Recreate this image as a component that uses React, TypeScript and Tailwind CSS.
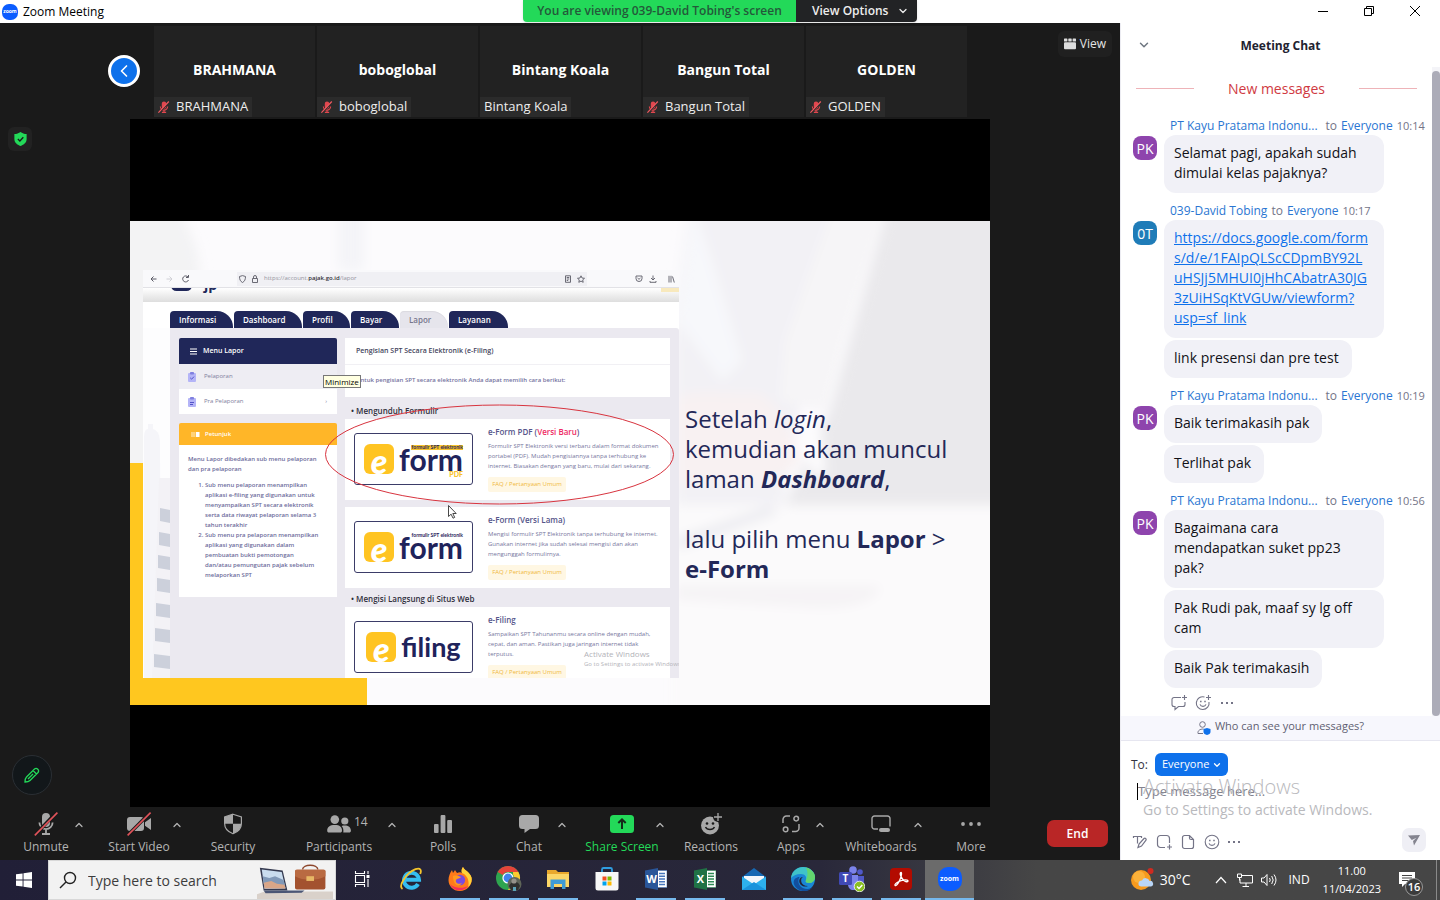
import React from "react";
import { ChevronDown, ChevronLeft, ChevronUp } from "lucide-react";

type IconProps = { className?: string };

/* ---------- meeting window icons ---------- */

function MutedMic({ className }: IconProps) {
  return (
    <svg viewBox="0 0 14 14" className={className} aria-hidden="true">
      <rect x="4.4" y="0.6" width="5.2" height="8.400" rx="2.6" fill="#e0474e" />
      <path d="M2.8 6.5a4.2 4.2 0 0 0 8.4 0M7 11v2M4.5 13.2h5" stroke="#e0474e" strokeWidth="1.4" fill="none" />
      <path d="M1.6 13.600 13 1.400" stroke="#2b2b2b" strokeWidth="1.600" />
      <path d="M.4 13.6 12.6 .6" stroke="#f0585f" strokeWidth="1.4" />
    </svg>
  );
}

function MicOff() {
  return (
    <svg viewBox="0 0 24 24" className="size-6" aria-hidden="true">
      <rect x="8" y="1" width="8" height="14" rx="4" fill="#a8a8a8" />
      <path d="M5.4 10.5a6.6 6.6 0 0 0 13.2 0M12 17.3v4M8 22h8" stroke="#a8a8a8" strokeWidth="1.8" fill="none" />
      <path d="M2 22 22 .8" stroke="#1a1a1a" strokeWidth="3.400" />
      <path d="M.8 23.4 23.4.6" stroke="#e0535a" strokeWidth="1.6" />
    </svg>
  );
}

function VideoOff() {
  return (
    <svg viewBox="0 0 26 24" className="h-6 w-[26px]" aria-hidden="true">
      <rect x="1" y="5" width="17" height="14" rx="3" fill="#a8a8a8" />
      <path d="M19 10.2 25 6v12l-6-4.2z" fill="#a8a8a8" />
      <path d="M3 22 24 .8" stroke="#1a1a1a" strokeWidth="3.400" />
      <path d="M1.6 23.4 24.6.6" stroke="#e0535a" strokeWidth="1.6" />
    </svg>
  );
}

function SecurityShield() {
  return (
    <svg viewBox="0 0 20 22" className="h-[22px] w-5" aria-hidden="true">
      <path d="M10 1.2 18.4 4v6.5c0 5-3.6 8.5-8.4 10.3C5.200 19 1.600 15.500 1.600 10.500V4z" fill="#1a1a1a" stroke="#a8a8a8" strokeWidth="1.2" />
      <path d="M10 1.200V10.800H1.600V4zM10 10.800h8.400C18.200 15.600 14.700 19 10 20.800z" fill="#a8a8a8" />
    </svg>
  );
}

function People() {
  return (
    <svg viewBox="0 0 24 18" className="h-[18px] w-6" fill="#a8a8a8" aria-hidden="true">
      <circle cx="7.800" cy="4.600" r="4.300" />
      <path d="M.2 15.500c0-3.600 2.600-5.600 7.600-5.600s7.200 2 7.200 5.600c0 1.600-.6 2-2 2H2.200c-1.400 0-2-.4-2-2z" />
      <circle cx="17.800" cy="6" r="3.600" />
      <path d="M16.300 17.500c.4-2.800-.2-5.200-1.700-6.600 5.200-1.300 9.300.6 9.300 4.600 0 1.400-.6 2-2 2z" />
    </svg>
  );
}

function PollBars() {
  return (
    <svg viewBox="0 0 18 18" className="size-[18px]" fill="#a8a8a8" aria-hidden="true">
      <rect x="0" y="9" width="4.600" height="9" rx="1" />
      <rect x="6.600" y="0" width="4.800" height="18" rx="1" />
      <rect x="13.200" y="5" width="4.800" height="13" rx="1" />
    </svg>
  );
}

function ChatBubble() {
  return (
    <svg viewBox="0 0 20 18" className="h-[18px] w-5" fill="#a8a8a8" aria-hidden="true">
      <path d="M3.500 0h13A3.500 3.500 0 0 1 20 3.500v7a3.500 3.500 0 0 1-3.500 3.500H11l-5.500 4v-4h-2A3.500 3.500 0 0 1 0 10.500v-7A3.500 3.500 0 0 1 3.500 0z" />
    </svg>
  );
}

function ShareIcon() {
  return (
    <svg viewBox="0 0 24 18" className="h-[18px] w-6" aria-hidden="true">
      <rect width="24" height="18" rx="3.500" fill="#23d959" />
      <path d="M12 14V4.500M8.300 8 12 4.300 15.700 8" stroke="#152a1a" strokeWidth="2" fill="none" />
    </svg>
  );
}

function ReactionIcon() {
  return (
    <svg viewBox="0 0 22 22" className="size-[22px]" aria-hidden="true">
      <circle cx="10" cy="12.500" r="9" fill="#a8a8a8" />
      <circle cx="18" cy="4" r="5" fill="#1a1a1a" />
      <path d="M18 0v8M14 4h8" stroke="#a8a8a8" strokeWidth="1.300" />
      <circle cx="7" cy="10.500" r="1.300" fill="#1a1a1a" />
      <circle cx="13" cy="10.500" r="1.300" fill="#1a1a1a" />
      <path d="M5.500 14c1.500 3.400 7.500 3.400 9 0" stroke="#1a1a1a" strokeWidth="1.400" fill="none" />
    </svg>
  );
}

function AppsIcon() {
  return (
    <svg viewBox="0 0 18 18" className="size-[18px]" fill="none" stroke="#a8a8a8" strokeWidth="1.500" aria-hidden="true">
      <path d="M1 8V4.500A3.500 3.500 0 0 1 4.500 1H8M10 16.500h3.500a3.500 3.500 0 0 0 3.500-3.500V9" />
      <circle cx="14.200" cy="3.600" r="2.300" />
      <circle cx="3.600" cy="14.400" r="2.300" />
    </svg>
  );
}

function WhiteboardIcon() {
  return (
    <svg viewBox="0 0 20 18" className="h-[18px] w-5" aria-hidden="true">
      <path d="M7 14H3.500A2.500 2.500 0 0 1 1 11.500v-8A2.500 2.500 0 0 1 3.500 1h13A2.500 2.500 0 0 1 19 3.500v8" fill="none" stroke="#a8a8a8" strokeWidth="1.400" />
      <rect x="8" y="13" width="11" height="4" rx="2" fill="#a8a8a8" />
    </svg>
  );
}

function MoreIcon() {
  return (
    <svg viewBox="0 0 22 6" className="h-[6px] w-[22px]" fill="#a8a8a8" aria-hidden="true">
      <circle cx="3" cy="3" r="1.900" />
      <circle cx="11" cy="3" r="1.900" />
      <circle cx="19" cy="3" r="1.900" />
    </svg>
  );
}

function Dots() {
  return (
    <svg viewBox="0 0 12 4" className="h-1 w-3" fill="#747487" aria-hidden="true">
      <rect x="0" y="1" width="2" height="2" />
      <rect x="5" y="1" width="2" height="2" />
      <rect x="10" y="1" width="2" height="2" />
    </svg>
  );
}

function SmileIcon({ plus = false }: { plus?: boolean }) {
  return (
    <svg viewBox="0 0 16 16" className="size-4" fill="none" stroke="#747487" strokeWidth="1.100" aria-hidden="true">
      {plus ? (
        <>
          <path d="M9.500 2A6.400 6.400 0 1 0 14 7" />
          <path d="M13.500 0v5M11 2.500h5" />
        </>
      ) : (
        <circle cx="8" cy="8" r="6.800" />
      )}
      <path d="M5 9.400c1 2.600 5 2.600 6 0" />
      <path d="M5.800 5.800v1.400M10 5.800v1.400" strokeWidth="1.500" />
    </svg>
  );
}

/* ---------- title bar ---------- */

function TitleBar() {
  return (
    <header className="grid h-[23px] grid-cols-[1fr_auto_1fr] bg-white">
      <div className="flex items-center gap-[5px] pl-[2px]">
        <span className="flex size-4 items-center justify-center rounded-[7px] bg-[#0b5cff] text-[5px] font-bold text-white">zoom</span>
        <h1 className="text-xs text-black">Zoom Meeting</h1>
      </div>
      <div className="flex h-[22px] overflow-hidden rounded-b-[4px] text-xs font-semibold shadow">
        <p className="flex w-[273px] items-center justify-center bg-[#23d959] text-[#24583a]">You are viewing 039-David Tobing's screen</p>
        <button className="flex w-[121px] items-center justify-between bg-[#222325] pr-2 pl-4 text-[#eee]">
          View Options
          <ChevronDown className="size-3" strokeWidth={2.500} />
        </button>
      </div>
      <div className="flex items-center justify-end gap-[34px] pr-[19px] pb-[2px]">
        <button aria-label="Minimize window">
          <svg viewBox="0 0 12 12" className="size-3"><path d="M1 6.500h10" stroke="#000" /></svg>
        </button>
        <button aria-label="Restore window">
          <svg viewBox="0 0 12 12" className="size-3" fill="none" stroke="#000"><path d="M1.500 3.500h7v7h-7zM3.500 3V1.500h7v7H9" /></svg>
        </button>
        <button aria-label="Close window">
          <svg viewBox="0 0 12 12" className="size-3"><path d="m1 1 10 10M11 1 1 11" stroke="#000" /></svg>
        </button>
      </div>
    </header>
  );
}

/* ---------- participant strip ---------- */

const participants = [
  { name: "BRAHMANA", muted: true },
  { name: "boboglobal", muted: true },
  { name: "Bintang Koala", muted: false },
  { name: "Bangun Total", muted: true },
  { name: "GOLDEN", muted: true },
];

function ParticipantStrip() {
  return (
    <section aria-label="Participants" className="flex h-24 items-start pr-2 pl-[108px]">
      <button aria-label="Previous participants" className="mt-8 mr-[14px] flex size-8 shrink-0 items-center justify-center rounded-full border-[3px] border-white bg-[#0e71eb] text-white">
        <ChevronLeft className="size-5" strokeWidth={2} />
      </button>
      <ul className="flex gap-[2px] pt-[3px]">
        {participants.map((p) => (
          <li key={p.name} className="grid h-[91px] w-[161px] grid-rows-[1fr_20px] bg-[#222]">
            <p className="pt-[34px] text-center text-[14px] leading-5 font-bold text-white">{p.name}</p>
            <p className="flex w-max items-center gap-[6px] bg-[#2b2b2b] px-1 text-[13px] text-[#eee]">
              {p.muted && <MutedMic className="size-3" />}
              {p.name}
            </p>
          </li>
        ))}
      </ul>
      <button className="mt-2 ml-auto flex h-[26px] items-center gap-1 rounded-md bg-[#202020] px-[6px] text-xs text-[#e4e4e4]">
        <svg viewBox="0 0 12 12" className="size-3" fill="#ddd" aria-hidden="true">
          <rect x="0" y="0.500" width="3.400" height="3" rx=".6" /><rect x="4.300" y="0.500" width="3.400" height="3" rx=".6" /><rect x="8.600" y="0.500" width="3.400" height="3" rx=".6" />
          <rect x="0" y="4.300" width="12" height="7" rx="1" />
        </svg>
        View
      </button>
    </section>
  );
}

/* ---------- shared slide ---------- */

function SlideBackdrop() {
  return (
    <svg viewBox="0 0 860 484" preserveAspectRatio="none" className="absolute inset-0 size-full" aria-hidden="true">
      <defs>
        <filter id="soft" x="-20%" y="-20%" width="140%" height="140%"><feGaussianBlur stdDeviation="6" /></filter>
      </defs>
      <rect width="860" height="484" fill="#fcfbfd" />
      <g filter="url(#soft)">
        <path d="M-60-40H30C60 0 70 30 70 55V280H-60z" fill="#f3f3f4" />
        <path d="M208-40h26v90h-26z" fill="#f4f4f8" />
        <path d="M562-40h160l-40 160-30 165H545V90z" fill="#f2f1f5" />
        <path d="M562-20l20 60 30 100-20 20-45-60z" fill="#f7f8fb" />
        <path d="M765-40h170v324H655l45-94z" fill="#eae9ec" />
        <path d="M712-40h50l-45 150-22 80-45-10 5-60z" fill="#f6f5f7" />
        <path d="M548 175c30-8 50 0 80-3 20 10 35 40 42 70l-30 20h-95z" fill="#f8f1f2" />
        <path d="M677 205l14 8 5 40h-16z" fill="#fdfcfd" />
        <path d="M540 284h400v260H540z" fill="#fbfafb" />
        <path d="M545 318l95-33 8 7L548 328z" fill="#ebebf0" />
        <path d="M545 365h205c0 15-30 22-60 22L545 378z" fill="#f5f3f5" />
      </g>
      <path d="M0 242h13v215h224v27H0z" fill="#ffc71f" />
    </svg>
  );
}

function Building() {
  const windows = [
    [17, 180], [16, 204], [15, 227], [14, 250], [13, 275], [12, 300], [11, 326],
  ];
  return (
    <svg viewBox="0 0 27 350" preserveAspectRatio="none" className="h-full w-[27px] shrink-0" aria-hidden="true">
      <rect width="27" height="350" fill="#fdfdfe" />
      <path d="M1 350V110q0-9 4-9v-5h5v5q6 1 7 12l1 237z" fill="#f5f5f9" />
      <path d="M16 150h11v200H9z" fill="#f3f2f6" />
      {windows.map(([x, y]) => (
        <path key={y} d={`M${x} ${y}L27 ${y + 2}V${y + 15}L${x} ${y + 13}z`} fill="#ccd0db" />
      ))}
    </svg>
  );
}

function PajakLogo({ word, caption, pdf = false }: { word: string; caption?: string; pdf?: boolean }) {
  return (
    <div className="mt-[14px] flex h-[52px] w-[119px] shrink-0 items-center justify-center gap-[5px] rounded-[3px] border border-[#3b3c68]">
      <span className="flex size-[30px] items-end justify-center overflow-hidden rounded-[6px] bg-[#ffc422] font-['Lato',sans-serif] text-[34px] leading-[27px] font-black text-white italic">e</span>
      <span className={`relative font-['Lato',sans-serif] font-bold text-[#1f235b] ${caption ? "text-[30px] leading-[36px]" : "text-[27px] leading-[36px]"}`}>
        {word}
        {caption && (
          <small className={`absolute top-[4px] right-0 pl-px text-[5px] leading-[5px] whitespace-nowrap ${pdf ? "bg-[#f8c32c]" : ""}`}>{caption}</small>
        )}
        {pdf && <small className="absolute right-0 bottom-0 text-[7px] leading-[6px] font-black text-[#f8c32c]">PDF</small>}
      </span>
    </div>
  );
}

function FormCard({ logo, title, lines }: { logo: React.ReactNode; title: React.ReactNode; lines: string[] }) {
  return (
    <article className="flex h-[81px] gap-[15px] bg-white pl-[9px]">
      {logo}
      <div className="pt-2">
        <h4 className="text-[8px] leading-[10px] font-semibold text-[#55558a]">{title}</h4>
        <p className="mt-1 text-[6px] leading-[10px] whitespace-nowrap text-[#77779e]">
          {lines.map((l) => (
            <span key={l} className="block">{l}</span>
          ))}
        </p>
        <a href="#faq" className="mt-[6px] block w-[78px] rounded-[2px] bg-[#fff7e3] text-center text-[6px] leading-[15px] font-medium text-[#f0b83c]">FAQ / Pertanyaan Umum</a>
      </div>
    </article>
  );
}

const siteTabs = [
  { label: "Informasi", width: "w-[63px]" },
  { label: "Dashboard", width: "w-[68px]" },
  { label: "Profil", width: "w-[47px]" },
  { label: "Bayar", width: "w-[48px]" },
  { label: "Lapor", width: "w-[48px]", active: true },
  { label: "Layanan", width: "w-[59px]" },
];

function Clipboard({ done = false }: { done?: boolean }) {
  return (
    <svg viewBox="0 0 8 10" className="h-[10px] w-2" aria-hidden="true">
      <rect x="0" y="1" width="8" height="9" rx="1" fill="#b4b4f7" />
      <rect x="2" y="0" width="4" height="2.500" rx=".8" fill="#8080e0" />
      <path d={done ? "M2.200 5.800 3.600 7.200 6 4.600" : "M2 5.500h4M2 7.500h3"} stroke="#5353c8" strokeWidth="1" fill="none" />
    </svg>
  );
}

function BrowserShot() {
  return (
    <div className="relative flex h-[408px] w-[536px] shrink-0 flex-col overflow-hidden bg-white">
      <div className="flex h-[18px] shrink-0 items-center border-b border-[#e2e2e6] bg-[#f9f9fb] pr-1 pl-[7px] text-[#5b5b66]">
        <svg viewBox="0 0 42 10" className="h-[10px] w-[42px]" fill="none" stroke="currentColor" aria-hidden="true">
          <path d="M6.500 5H1M3.500 2.500 1 5l2.500 2.500" />
          <path d="M16.500 5H22M19.500 2.500 22 5l-2.500 2.500" stroke="#d0d0d6" />
          <path d="M38 3a3 3 0 1 0 .5 3M38.500 1v2.500H36" />
        </svg>
        <div className="ml-[45px] flex h-[14px] w-[350px] items-center gap-[6px] bg-[#f0f0f4] pl-[2px] text-[6px] text-[#94949e]">
          <svg viewBox="0 0 19 8" className="h-2 w-[19px]" fill="none" stroke="#5b5b66" strokeWidth=".9" aria-hidden="true">
            <path d="M3.500.600 6.500 1.500c0 3-.8 4.800-3 6-2.200-1.200-3-3-3-6zM13.500 3.500h5v4h-5zM14.500 3.500v-1.500a1.500 1.500 0 0 1 3 0v1.500" />
          </svg>
          <span>https://account.<b className="font-semibold text-[#303038]">pajak.go.id</b>/lapor</span>
          <svg viewBox="0 0 22 8" className="mr-px ml-auto h-2 w-[22px]" fill="none" stroke="#5b5b66" strokeWidth=".9" aria-hidden="true">
            <path d="M1.500.800h5v6.500h-5zM2.700 2.500h2.600M2.700 4h2.600M2.700 5.500h1.500" />
            <path d="m17 .8 1 2.200 2.500.3-1.800 1.600.5 2.400L17 6.100l-2.200 1.200.5-2.400-1.800-1.600L16 3z" />
          </svg>
        </div>
        <svg viewBox="0 0 40 8" className="ml-auto h-2 w-10" fill="none" stroke="currentColor" strokeWidth=".9" aria-hidden="true">
          <path d="M1 1h6v2.500a3 3 0 0 1-6 0zM2.500 3 4 4.300 5.500 3M18 .500v4.500M16 3l2 2 2-2M15 6v1.300h6V6M34 .800v6.700M36 .800v6.700M37.500 1.500l1.800 6" />
        </svg>
      </div>
      <div className="flex h-[14px] shrink-0 gap-3 overflow-hidden bg-linear-to-b from-white to-[#dedede] pl-7">
        <span className="-mt-2 h-[11px] w-[21px] rounded-[8px] bg-[#202759]" />
        <span className="-mt-[12px] text-[14px] leading-[18px] font-bold text-[#202759]">jp</span>
        <span className="ml-auto h-1 w-[18px] bg-[#f8e9bd]" />
      </div>
      <nav className="flex h-[26px] shrink-0 items-end gap-px pl-[27px] text-[8px] font-semibold">
        {siteTabs.map((t) => (
          <a key={t.label} href="#tab" className={`${t.width} h-[17px] rounded-tl-[4px] rounded-tr-[16px] pl-[9px] leading-[18px] ${t.active ? "bg-[#e6e5ec] text-[#77778c] inset-shadow-xs" : "bg-[#202759] text-white"}`}>
            {t.label}
          </a>
        ))}
      </nav>
      <div className="flex min-h-0 flex-1">
        <Building />
        <div className="flex min-w-0 flex-1 gap-2 rounded-tr-[3px] bg-[#ebe9f0] px-[9px] pt-[10px]">
          <aside className="w-[158px] shrink-0">
            <h2 className="flex h-[26px] items-center gap-[6px] rounded-t-[2px] bg-[#202759] pl-[11px] text-[7px] font-semibold text-white">
              <svg viewBox="0 0 7 7" className="size-[7px]" aria-hidden="true"><path d="M0 1h7M0 3.500h7M0 6h7" stroke="#fff" strokeWidth="1.200" /></svg>
              Menu Lapor
            </h2>
            <ul className="text-[6px] text-[#80809c]">
              <li className="flex h-[25px] items-center gap-2 bg-[#eeedf3] pl-[9px]"><Clipboard done />Pelaporan</li>
              <li className="flex h-[25px] items-center gap-2 bg-white pr-[10px] pl-[9px]"><Clipboard />Pra Pelaporan<span className="ml-auto">›</span></li>
            </ul>
            <h2 className="mt-[9px] flex h-[22px] items-center gap-[5px] rounded-t-[2px] bg-[#ffb628] pl-3 text-[6px] font-semibold text-white">
              <svg viewBox="0 0 9 7" className="h-[7px] w-[9px]" aria-hidden="true"><path d="M0 1h4v5H0z" fill="#ffd27a" /><path d="M4.800 1H8.500v5H4.800z" fill="#fff" /></svg>
              Petunjuk
            </h2>
            <div className="h-[152px] bg-white pt-[9px] pl-[9px] text-[6px] leading-[10px] font-semibold whitespace-nowrap text-[#6d6c9b]">
              <p>Menu Lapor dibedakan sub menu pelaporan<br />dan pra pelaporan</p>
              <ol className="mt-[6px] list-decimal pl-[17px]">
                <li>Sub menu pelaporan menampilkan<br />aplikasi e-filing yang digunakan untuk<br />menyampaikan SPT secara elektronik<br />serta data riwayat pelaporan selama 3<br />tahun terakhir</li>
                <li>Sub menu pra pelaporan menampilkan<br />aplikasi yang digunakan dalam<br />pembuatan bukti pemotongan<br />dan/atau pemungutan pajak sebelum<br />melaporkan SPT</li>
              </ol>
            </div>
          </aside>
          <div className="min-w-0 flex-1">
            <div className="h-[59px] bg-white pl-[11px]">
              <h3 className="-ml-[11px] border-b border-[#f1f0f4] pl-[11px] text-[7px] leading-[26px] font-semibold text-[#45455c]">Pengisian SPT Secara Elektronik (e-Filing)</h3>
              <p className="text-[6px] leading-[31px] font-semibold text-[#7573a0]">Untuk pengisian SPT secara elektronik Anda dapat memilih cara berikut:</p>
            </div>
            <h3 className="h-[22px] pt-[7px] pl-[6px] text-[8px] leading-[13px] font-semibold text-[#2f2f3c]">• Mengunduh Formulir</h3>
            <FormCard
              logo={<PajakLogo word="form" caption="formulir SPT elektronik" pdf />}
              title={<>e-Form PDF (<span className="text-[#ee2a64]">Versi Baru</span>)</>}
              lines={["Formulir SPT Elektronik versi terbaru dalam format dokumen", "portabel (PDF). Mudah pengisiannya tanpa terhubung ke", "internet. Biasakan dengan yang baru, mulai dari sekarang."]}
            />
            <div className="h-[7px]" />
            <FormCard
              logo={<PajakLogo word="form" caption="formulir SPT elektronik" />}
              title="e-Form (Versi Lama)"
              lines={["Mengisi formulir SPT Elektronik tanpa terhubung ke internet.", "Gunakan internet jika sudah selesai mengisi dan akan", "mengunggah formulirnya."]}
            />
            <h3 className="h-[19px] pt-1 pl-[6px] text-[8px] leading-[13px] font-semibold text-[#2f2f3c]">• Mengisi Langsung di Situs Web</h3>
            <FormCard
              logo={<PajakLogo word="filing" />}
              title="e-Filing"
              lines={["Sampaikan SPT Tahunanmu secara online dengan mudah,", "cepat, dan aman. Pastikan juga jaringan internet tidak", "terputus."]}
            />
          </div>
        </div>
      </div>
      <span className="absolute top-[105px] left-[180px] border border-[#777] bg-[#ffffe1] px-px text-[8px] leading-[11px] text-black">Minimize</span>
      <p className="absolute top-[378px] left-[441px] text-[8px] leading-[11px] whitespace-nowrap text-[#b3b3b9]">
        Activate Windows
        <span className="block text-[6px] leading-[10px]">Go to Settings to activate Windows.</span>
      </p>
      <svg viewBox="0 0 536 408" className="pointer-events-none absolute inset-0 size-full" aria-hidden="true">
        <ellipse cx="356.500" cy="184.500" rx="174" ry="49.500" fill="none" stroke="#d8343f" strokeWidth="1" />
        <path d="M305.500 235.500v11l2.600-2.300 1.900 4 1.700-.8-1.900-3.900h3.400z" fill="#fff" stroke="#333" strokeWidth=".9" />
      </svg>
    </div>
  );
}

function Slide() {
  return (
    <article className="relative flex h-[484px] w-full overflow-hidden bg-white">
      <SlideBackdrop />
      <div className="relative flex gap-[6px] pt-[49px] pl-[13px]">
        <BrowserShot />
        <div className="pt-[134px] text-[24px] leading-[30px] whitespace-nowrap text-[#232858]">
          <p>Setelah <i>login</i>,<br />kemudian akan muncul<br />laman <b><i>Dashboard</i></b>,</p>
          <p className="mt-[30px]">lalu pilih menu <b>Lapor</b> &gt;<br /><b>e-Form</b></p>
        </div>
      </div>
    </article>
  );
}

/* ---------- meeting toolbar ---------- */

type Tool = { label: string; icon: React.ReactNode; box: string; menu?: boolean; green?: boolean; count?: number };

const tools: Tool[] = [
  { label: "Unmute", icon: <MicOff />, box: "ml-[21px] w-[50px]", menu: true },
  { label: "Start Video", icon: <VideoOff />, box: "ml-[22px] w-[60px]", menu: true },
  { label: "Security", icon: <SecurityShield />, box: "ml-[23px] w-[50px]" },
  { label: "Participants", icon: <People />, box: "ml-12 w-[66px]", menu: true, count: 14 },
  { label: "Polls", icon: <PollBars />, box: "ml-[18px] w-[50px]" },
  { label: "Chat", icon: <ChatBubble />, box: "ml-9 w-[50px]", menu: true },
  { label: "Share Screen", icon: <ShareIcon />, box: "ml-[22px] w-[60px]", menu: true, green: true },
  { label: "Reactions", icon: <ReactionIcon />, box: "ml-[18px] w-[50px]" },
  { label: "Apps", icon: <AppsIcon />, box: "ml-[34px] w-[42px]", menu: true },
  { label: "Whiteboards", icon: <WhiteboardIcon />, box: "ml-6 w-[58px]", menu: true },
  { label: "More", icon: <MoreIcon />, box: "ml-5 w-[50px]" },
];

function MeetingToolbar() {
  return (
    <footer className="flex h-[53px] items-start pr-3">
      {tools.map((t) => (
        <React.Fragment key={t.label}>
          <button className={`${t.box} relative flex shrink-0 flex-col items-center text-xs whitespace-nowrap ${t.green ? "text-[#23d959]" : "text-[#b4b4b4]"}`}>
            <span className="flex h-[34px] items-center">{t.icon}</span>
            <span className="-mt-[2px] leading-4">{t.label}</span>
            {t.count && <span className="absolute top-[7px] left-[48px] leading-4">{t.count}</span>}
          </button>
          {t.menu && (
            <button aria-label={`${t.label} options`} className={`${t.count ? "ml-3" : ""} mt-3 flex w-4 shrink-0 justify-center text-[#b4b4b4]`}>
              <ChevronUp className="size-3" strokeWidth={2.500} />
            </button>
          )}
        </React.Fragment>
      ))}
      <button className="mt-[13px] ml-auto h-[27px] w-[61px] rounded-[7px] bg-[#b92626] text-xs font-semibold text-white">End</button>
    </footer>
  );
}

/* ---------- chat panel ---------- */

type Message = { body: React.ReactNode; wide?: boolean };
type Group = { from: string; initials: string; color: string; time: string; gap: string; messages: Message[] };

const link = ["https://docs.google.com/form", "s/d/e/1FAIpQLScCDpmBY92L", "uHSJj5MHUI0jHhCAbatrA30JG", "3zUiHSqKtVGUw/viewform?", "usp=sf_link"];

const groups: Group[] = [
  { from: "PT Kayu Pratama Indonu...", initials: "PK", color: "bg-[#8e44ad]", time: "10:14", gap: "gap-2", messages: [{ wide: true, body: <>Selamat pagi, apakah sudah<br />dimulai kelas pajaknya?</> }] },
  {
    from: "039-David Tobing", initials: "0T", color: "bg-[#1f7cb8]", time: "10:17", gap: "gap-1",
    messages: [
      { wide: true, body: <a href={link.join("")} className="text-[#0e71eb] underline">{link.map((l) => <span key={l} className="block">{l}</span>)}</a> },
      { body: "link presensi dan pre test" },
    ],
  },
  { from: "PT Kayu Pratama Indonu...", initials: "PK", color: "bg-[#8e44ad]", time: "10:19", gap: "gap-2", messages: [{ body: "Baik terimakasih pak" }, { body: "Terlihat pak" }] },
  {
    from: "PT Kayu Pratama Indonu...", initials: "PK", color: "bg-[#8e44ad]", time: "10:56", gap: "gap-2",
    messages: [
      { wide: true, body: <>Bagaimana cara<br />mendapatkan suket pp23<br />pak?</> },
      { wide: true, body: <>Pak Rudi pak, maaf sy lg off<br />cam</> },
      { body: "Baik Pak terimakasih" },
    ],
  },
];

function ChatPanel() {
  return (
    <aside className="relative flex w-80 shrink-0 flex-col border-l border-[#ececf2] bg-white">
      <header className="grid h-11 grid-cols-[1fr_auto_1fr] items-center px-4">
        <button aria-label="Collapse chat" className="justify-self-start text-[#6e7680]"><ChevronDown className="size-[14px]" strokeWidth={2.500} /></button>
        <h2 className="pt-px text-xs font-bold text-[#222230]">Meeting Chat</h2>
      </header>
      <div className="flex flex-1">
        <div className="min-w-0 flex-1">
          <div className="flex h-[41px] items-center justify-between px-[15px] pt-[2px] text-[14px] text-[#d03a42]">
            <span className="h-px w-[58px] bg-[#eeb3b8]" />
            New messages
            <span className="h-px w-[58px] bg-[#eeb3b8]" />
          </div>
          {groups.map((g) => (
            <section key={g.time} className="flex gap-[7px] pl-3">
              <span className={`${g.color} mt-7 flex size-6 shrink-0 items-center justify-center rounded-lg text-[14px] text-white`}>{g.initials}</span>
              <div className="flex flex-col items-start gap-[2px]">
                <p className={`flex h-[25px] items-end pl-[6px] text-xs leading-[14px] whitespace-nowrap text-[#747487] ${g.gap}`}>
                  <span className="text-[#2a76d2]">{g.from}</span>
                  <span className="flex gap-1">to <span className="text-[#2a76d2]">Everyone</span> <span className="text-[11px]">{g.time}</span></span>
                </p>
                {g.messages.map((m, i) => (
                  <div key={i} className={`${m.wide ? "w-[220px]" : ""} rounded-[12px] bg-[#f1f1f7] pt-2 pr-[13px] pb-[10px] pl-[10px] text-[14px] leading-5 whitespace-nowrap text-[#111118]`}>{m.body}</div>
                ))}
              </div>
            </section>
          ))}
          <div className="flex h-7 items-center gap-2 pt-px pl-[50px]">
            <button aria-label="Reply">
              <svg viewBox="0 0 16 16" className="size-4" fill="none" stroke="#747487" strokeWidth="1.100" aria-hidden="true">
                <path d="M10 2.500H3A2 2 0 0 0 1 4.500v5a2 2 0 0 0 2 2h1v3l3.500-3H12a2 2 0 0 0 2-2V7M13.500 0v5M11 2.500h5" />
              </svg>
            </button>
            <button aria-label="Add reaction"><SmileIcon plus /></button>
            <button aria-label="More actions" className="ml-[2px]"><Dots /></button>
          </div>
        </div>
        <div className="w-2 bg-[#f4f4f8] pt-1"><div className="h-full rounded-full bg-[#acacb8]" /></div>
      </div>
      <button className="flex h-[25px] items-center justify-center gap-1 border-b border-[#e6e6f0] bg-[#f7f7fd] pb-1 text-[11px] text-[#5f5f72]">
        <svg viewBox="0 0 14 14" className="mt-1 size-[14px]" fill="none" aria-hidden="true">
          <circle cx="5.500" cy="3.500" r="2.800" stroke="#747487" />
          <path d="M6 12.500H1C.5 9.500 3 8 6.500 8" stroke="#747487" />
          <path d="m10 7 3.500 1v3c0 1.500-1.500 2.500-3.500 3-2-.5-3.500-1.500-3.500-3V8z" fill="#0e71eb" />
        </svg>
        Who can see your messages?
      </button>
      <form className="relative flex h-[119px] flex-col px-[10px] pt-3">
        <div className="flex items-center gap-[7px] text-xs text-[#333340]">
          <label htmlFor="recipient">To:</label>
          <span className="relative flex items-center">
            <select id="recipient" defaultValue="Everyone" className="h-[23px] w-[73px] appearance-none rounded-[6px] bg-[#0e71eb] pl-[7px] text-[11px] text-white">
              <option>Everyone</option>
            </select>
            <ChevronDown className="pointer-events-none absolute right-[6px] size-[10px] text-white" strokeWidth={3} />
          </span>
        </div>
        <div className="mt-[5px] ml-[6px] flex items-center">
          <span className="h-[17px] w-px bg-black" />
          <input aria-label="Message" placeholder="Type message here..." className="w-full text-[13px] leading-5 outline-none placeholder:text-[#82828e]" />
        </div>
        <p className="pointer-events-none absolute top-[33px] left-[22px] text-[20px] leading-[26px] font-light whitespace-nowrap text-[#b9b9bd]">
          Activate Windows
          <span className="block text-[14px] leading-[19px] font-normal">Go to Settings to activate Windows.</span>
        </p>
        <div className="mt-auto flex items-center pr-1 pb-2">
          <div className="flex items-center gap-2 pt-1 pl-px">
            <button type="button" aria-label="Format">
              <svg viewBox="0 0 16 16" className="size-4" fill="none" stroke="#747487" strokeWidth="1.200" aria-hidden="true"><path d="M1.500 4V2.500h8V4M5.500 2.500v7M6 13.500l1-3.500 5-5.500c1-1 2.800.4 2 1.700L9.500 12z" /></svg>
            </button>
            <button type="button" aria-label="Screenshot">
              <svg viewBox="0 0 16 16" className="size-4" fill="none" stroke="#747487" strokeWidth="1.200" aria-hidden="true"><path d="M9 13.500H4.500A3 3 0 0 1 1.500 10.500v-6a3 3 0 0 1 3-3h6a3 3 0 0 1 3 3V9M13.500 10.500v5M11 13h5" /></svg>
            </button>
            <button type="button" aria-label="File">
              <svg viewBox="0 0 16 16" className="size-4" fill="none" stroke="#747487" strokeWidth="1.200" aria-hidden="true"><path d="M4.500 1.500h5l4 4v7a2 2 0 0 1-2 2h-7a2 2 0 0 1-2-2v-9a2 2 0 0 1 2-2zM9.500 1.500v2.500a1.500 1.500 0 0 0 1.500 1.500h2.500" /></svg>
            </button>
            <button type="button" aria-label="Emoji"><SmileIcon /></button>
            <button type="button" aria-label="More"><Dots /></button>
          </div>
          <button type="submit" aria-label="Send" className="ml-auto flex size-6 items-center justify-center rounded-[7px] bg-[#efeff5]">
            <svg viewBox="0 0 12 12" className="size-3" fill="#84848f" aria-hidden="true"><path d="M0 1.500 12 1 6 11.500 5 7l3.500-3.200L3.800 6z" /></svg>
          </button>
        </div>
      </form>
    </aside>
  );
}

/* ---------- Windows taskbar ---------- */

function OfficeIcon({ letter, dark, light }: { letter: string; dark: string; light: string }) {
  return (
    <svg viewBox="0 0 22 22" className="size-[22px]" aria-hidden="true">
      <path d="M10 2.500h12v17H10z" fill="#fff" stroke={light} strokeWidth=".6" />
      <path d="M14 5.500h6M14 8.200h6M14 11h6M14 13.800h6M14 16.500h6" stroke={light} strokeWidth="1.400" />
      <path d="M0 2.500 13 0v22L0 19.500z" fill={dark} />
      <text x="6.500" y="15" textAnchor="middle" fontSize="11" fontWeight="700" fill="#fff">{letter}</text>
    </svg>
  );
}

const apps: { name: string; open?: boolean; active?: boolean; icon: React.ReactNode }[] = [
  {
    name: "Task View",
    icon: (
      <svg viewBox="0 0 16 16" className="size-4" fill="none" stroke="#fff" strokeWidth="1.100"><path d="M1.500 4.500h9v7h-9zM1.500 0v2.500h9V0M1.500 16v-2.500h9V16M14 0v3M14 8v8" /><path d="M12.500 4h3v3h-3z" fill="#fff" stroke="none" /></svg>
    ),
  },
  {
    name: "Internet Explorer",
    icon: (
      <svg viewBox="0 0 24 24" className="size-6" fill="none">
        <path d="M19 17A7.500 7.500 0 1 1 20 12.800H7" stroke="#35bdf0" strokeWidth="4" />
        <path d="M3.500 22C-1 19 7 6 16.500 2.200c5-1.700 6.300.8 4.700 4.800" stroke="#f5c52c" strokeWidth="1.800" />
      </svg>
    ),
  },
  {
    name: "Firefox", open: true,
    icon: (
      <svg viewBox="0 0 24 24" className="size-6">
        <path d="M15 0c1 3 7 5 8.500 10.500C25 17 19.500 24 12 24 5 24 .5 19 .5 13 .5 9 2 6 4 3l1 3 2-3 2 3c2-1 4-1 5 0-1-2 0-5 1-6z" fill="#ff7a1a" />
        <path d="M15 0c1 3 7 5 8.500 10.500.8 4-1 7.500-3.500 9.500 2-6-1-12-6-14-1-2 0-5 1-6z" fill="#ffd43a" />
        <path d="M2 17c3 7 13 9 18 2-5 3-15 2-18-2z" fill="#f52f5b" />
        <circle cx="12" cy="13" r="5.200" fill="#7a4ae0" />
        <path d="M5 9c3-1 6 0 8 1-1 2-4 1-5 3-1 3 3 5 6 3-3 5-9 2-9-7z" fill="#ff9a1f" />
      </svg>
    ),
  },
  {
    name: "Chrome", open: true,
    icon: (
      <svg viewBox="0 0 26 26" className="size-[26px]">
        <circle cx="12" cy="12" r="12" fill="#2ea44f" />
        <path d="M12 0a12 12 0 0 1 10.400 6H12a6 6 0 0 0-5.200 3L1.600 6A12 12 0 0 1 12 0z" fill="#e5443a" />
        <path d="M22.400 6A12 12 0 0 1 12 24l5.200-9A6 6 0 0 0 17 8.500V6z" fill="#fccb2f" />
        <circle cx="12" cy="12" r="5.600" fill="#fff" /><circle cx="12" cy="12" r="4.400" fill="#3f84ee" />
        <circle cx="18.500" cy="18" r="7" fill="#5e6458" />
        <path d="M13 20c2-5 9-6 11 0l-2 4h-7z" fill="#2f302e" /><circle cx="18" cy="15" r="2.600" fill="#95928a" /><path d="M17 21h3v4h-3z" fill="#5ba2b8" />
      </svg>
    ),
  },
  {
    name: "File Explorer", open: true,
    icon: (
      <svg viewBox="0 0 22 20" className="h-5 w-[22px]"><path d="M0 1h9l2 2h11v15H0z" fill="#e9a82c" /><path d="M0 5h22v13H0z" fill="#fcd667" /><path d="M3.500 10.500h15V20H15v-5H7v5H3.500z" fill="#3f9bd6" /></svg>
    ),
  },
  {
    name: "Microsoft Store",
    icon: (
      <svg viewBox="0 0 24 24" className="size-6"><path d="M7 6V2.500A1.500 1.500 0 0 1 8.500 1h7A1.500 1.500 0 0 1 17 2.500V6" fill="none" stroke="#2f9de0" strokeWidth="1.800" /><path d="M.5 5h23v16a2.500 2.500 0 0 1-2.500 2.500H3A2.500 2.500 0 0 1 .5 21z" fill="#f7f7f7" /><path d="M7.500 9.500h4v4h-4z" fill="#f25022" /><path d="M12.500 9.500h4v4h-4z" fill="#7fba00" /><path d="M7.500 14.500h4v4h-4z" fill="#00a4ef" /><path d="M12.500 14.500h4v4h-4z" fill="#ffb900" /></svg>
    ),
  },
  { name: "Word", open: true, icon: <OfficeIcon letter="W" dark="#2a5699" light="#4877bd" /> },
  { name: "Excel", open: true, icon: <OfficeIcon letter="X" dark="#207245" light="#2f8a56" /> },
  {
    name: "Mail",
    icon: (
      <svg viewBox="0 0 24 22" className="h-[22px] w-6"><path d="M0 9 12 0l12 9v12H0z" fill="#1668b3" /><path d="M2 8h20v10H2z" fill="#f3f6fa" /><path d="m0 8.500 12 8 12-8V22H0z" fill="#2db1ee" /><path d="M0 22 12 14l12 8z" fill="#1b93dc" /></svg>
    ),
  },
  {
    name: "Edge", open: true,
    icon: (
      <svg viewBox="0 0 24 24" className="size-6"><circle cx="12" cy="12" r="12" fill="#1a86d6" /><path d="M0 11C1 4 6 0 12 0c7 0 12 5 12 10 0 4-3 6-6 6s-4-1-3-3c1-3-1-6-5-6-5 0-8 2-10 4z" fill="#3fc3c9" /><path d="M15 .4c6 2 9 6 9 9.600 0 4-3 6-6 6s-4-1-3-3c2-4 2-8 0-12.600z" fill="#63d66e" /><path d="M8.500 10c-3 5 0 12 8 12 2 0 4-1 5-2-3 5-12 6-17 0-4-5-1-10 4-10z" fill="#124f9e" /><path d="M12 10c-3 1-3 9 5 9-5 2-10-2-8.500-6.500C9 11 10 10 12 10z" fill="#252338" /></svg>
    ),
  },
  {
    name: "Teams", open: true,
    icon: (
      <svg viewBox="0 0 26 26" className="size-[26px]"><circle cx="14" cy="4" r="3.800" fill="#7b83eb" /><circle cx="21" cy="6" r="2.800" fill="#5059c9" /><path d="M9 9h10v9c0 8-10 8-10 0z" fill="#7b83eb" /><path d="M19 10h6v8c0 4-3 5-6 4z" fill="#5059c9" /><rect x="0" y="6" width="13" height="13" rx="1.500" fill="#4049b5" /><text x="6.500" y="16.300" textAnchor="middle" fontSize="10" fontWeight="700" fill="#fff">T</text><circle cx="20.500" cy="20.500" r="5.300" fill="#89bf21" stroke="#fff" strokeWidth=".8" /><path d="m18 20.500 2 2 3.300-3.500" stroke="#fff" strokeWidth="1.400" fill="none" /></svg>
    ),
  },
  {
    name: "Acrobat Reader", open: true,
    icon: (
      <svg viewBox="0 0 22 22" className="size-[22px]"><rect width="22" height="22" rx="4" fill="#b30b00" /><path d="M11 4.500c-2 0 0 6 3.500 8.500 2 1.200 3.500.8 3.500 0 0-1.500-5-1.500-9 .5-3 1.300-4.500 3-4 3.800 1 1.200 3.500-2 5-5.800 1.500-3.500 2-7 1-7z" fill="none" stroke="#fff" strokeWidth="1.300" /></svg>
    ),
  },
  { name: "Zoom", open: true, active: true, icon: <span className="flex size-6 items-center justify-center rounded-[10px] bg-[#0b5cff] text-[7px] font-bold text-white">zoom</span> },
];

function SearchArt() {
  return (
    <svg viewBox="0 0 80 40" className="h-full w-20 shrink-0" aria-hidden="true">
      <path d="M0 35 8 32h72v8H0z" fill="#d9d1ca" />
      <path d="m3 7 24 3 5 21H7z" fill="#34394f" />
      <path d="m5 9 21 2.500 4 17.500-22 .5z" fill="#c9dcee" />
      <path d="m6 16 7 2 6-2 9 4 2 8.500-22 .5z" fill="#8199b8" /><path d="m7 23 8-2 6 3 8 1 1 4H8z" fill="#d9a688" />
      <path d="M7 31h25l18 0-3 2.500-38 .5z" fill="#4b5675" />
      <path d="M48 9c0-6 16-6 16 0" fill="none" stroke="#8c452b" strokeWidth="1.600" />
      <path d="M40 10h32v18a2 2 0 0 1-2 2H42a2 2 0 0 1-2-2z" fill="#a3522f" />
      <path d="M40 11a2 2 0 0 1 2-2h28a2 2 0 0 1 2 2v5c-8 5-24 5-32 0z" fill="#b96a42" />
      <path d="M52 16h8v5h-8z" fill="#e7b765" />
    </svg>
  );
}

function Taskbar() {
  return (
    <footer className="flex h-10 items-stretch bg-linear-to-r from-[#211f37] from-0% via-[#29283a] via-57% to-[#464646] to-72% text-white">
      <button aria-label="Start" className="flex w-12 items-center justify-center">
        <svg viewBox="0 0 16 16" className="size-4" fill="#fff"><path d="M0 2.300 6.600 1.400v6.200H0zM7.500 1.200 16 0v7.600H7.500zM0 8.400h6.600v6.200L0 13.700zM7.500 8.400H16V16l-8.500-1.200z" /></svg>
      </button>
      <label className="flex w-72 items-center overflow-hidden border border-[#d8d8d8] bg-[#f2f2f2]">
        <svg viewBox="0 0 18 18" className="ml-[10px] size-[18px] shrink-0" fill="none" stroke="#222" strokeWidth="1.400" aria-hidden="true"><circle cx="11" cy="7" r="5.500" /><path d="M7 11 1 17" /></svg>
        <input aria-label="Search" placeholder="Type here to search" className="ml-[11px] min-w-0 flex-1 text-[14px] placeholder:text-[#3c3c3c]" />
        <SearchArt />
      </label>
      <nav aria-label="Applications" className="ml-px flex">
        {apps.map((a) => (
          <button key={a.name} aria-label={a.name} className={`flex w-[49px] flex-col items-center ${a.active ? "bg-[#6b6b6b]" : ""}`}>
            <span className="flex flex-1 items-center">{a.icon}</span>
            <span className={`h-[2px] ${a.active ? "w-full" : "w-10"} ${a.open ? "bg-[#76b9ed]" : ""}`} />
          </button>
        ))}
      </nav>
      <div className="ml-auto flex items-center pr-[3px] text-xs">
        <button className="flex items-center gap-[6px] text-[14px]">
          <svg viewBox="0 0 24 24" className="size-6" aria-hidden="true">
            <circle cx="11" cy="12" r="10" fill="#f79a1d" /><circle cx="9" cy="9" r="6" fill="#fbb13a" />
            <path d="M11 18.500a3 3 0 0 1 1-6 4 4 0 0 1 7.500.5 2.800 2.800 0 0 1 1.500 5.500z" fill="#b9d5f7" />
            <circle cx="20.500" cy="3" r="3" fill="#cf2b20" />
          </svg>
          30°C
        </button>
        <button aria-label="Hidden icons" className="ml-6">
          <svg viewBox="0 0 12 8" className="h-2 w-3" fill="none" stroke="#fff" strokeWidth="1.200"><path d="m1 7 5-5.500L11 7" /></svg>
        </button>
        <button aria-label="Network" className="ml-[10px]">
          <svg viewBox="0 0 16 14" className="h-[14px] w-4" fill="none" stroke="#fff"><path d="M5 2.500h10.500v7.500H3V6M9 10v3M5.500 13.500H12M.500 1h4v3.500h-4zM2.500 4.500v3" /></svg>
        </button>
        <button aria-label="Volume" className="ml-2">
          <svg viewBox="0 0 16 14" className="h-[14px] w-4" fill="none" stroke="#fff"><path d="M.500 5h2.500l3-3.500v11L3 9H.500zM8.500 5q1.500 2 0 4M10.700 3q3 4 0 8M13 1.500q4 5.500 0 11" /></svg>
        </button>
        <button className="ml-3">IND</button>
        <time className="ml-[13px] text-center text-[11px] leading-[18px]">11.00<br />11/04/2023</time>
        <button aria-label="16 notifications" className="relative ml-4 h-10 w-7">
          <svg viewBox="0 0 16 16" className="absolute top-3 left-[2px] size-4"><path d="M0 0h16v12H6l-3 3v-3H0z" fill="#fff" /><path d="M3 3.500h10M3 6h10M3 8.500h7" stroke="#444" /></svg>
          <span className="absolute top-[18px] left-2 flex size-[18px] items-center justify-center rounded-full border border-[#999] bg-[#3b3b3b] text-[11px] font-semibold">16</span>
        </button>
        <span className="ml-[11px] h-full w-px bg-[#8a8a8a]" />
      </div>
    </footer>
  );
}

export default function App() {
  return (
    <div className="flex min-h-screen flex-col bg-white font-['Open_Sans','Noto_Sans',sans-serif]">
      <TitleBar />
      <div className="flex flex-1">
        <main className="flex min-w-0 flex-1 flex-col bg-[#1a1a1a]">
          <ParticipantStrip />
          <div className="grid flex-1 grid-cols-[130px_1fr_130px]">
            <div className="flex flex-col items-start justify-between pt-2 pb-3">
              <button aria-label="Meeting is secure" className="ml-2 flex size-6 items-center justify-center rounded-md bg-[#222]">
                <svg viewBox="0 0 14 16" className="h-[14px] w-[13px]"><path d="M7 0c2 1.500 4.500 2.300 7 2.300V8c0 4-3 6.500-7 8-4-1.500-7-4-7-8V2.300C2.500 2.300 5 1.500 7 0z" fill="#23d959" /><path d="m4 8 2.300 2.300L10.200 6" stroke="#1a1a1a" strokeWidth="1.500" fill="none" /></svg>
              </button>
              <button aria-label="Annotate" className="ml-3 flex size-10 items-center justify-center rounded-full border border-[#2a2f34] bg-[#12171a]">
                <svg viewBox="0 0 16 16" className="size-4" fill="none" stroke="#23d959" strokeWidth="1.300"><path d="M1 15c0-3 .5-4 1.500-5L10.500 2a2.500 2.500 0 0 1 3.500 3.500L6 13.500c-1 1-2 1.500-5 1.500zM9 3.500l3.500 3.500M4 12l5-5" /></svg>
              </button>
            </div>
            <div className="flex items-center bg-black"><Slide /></div>
          </div>
          <MeetingToolbar />
        </main>
        <ChatPanel />
      </div>
      <Taskbar />
    </div>
  );
}
